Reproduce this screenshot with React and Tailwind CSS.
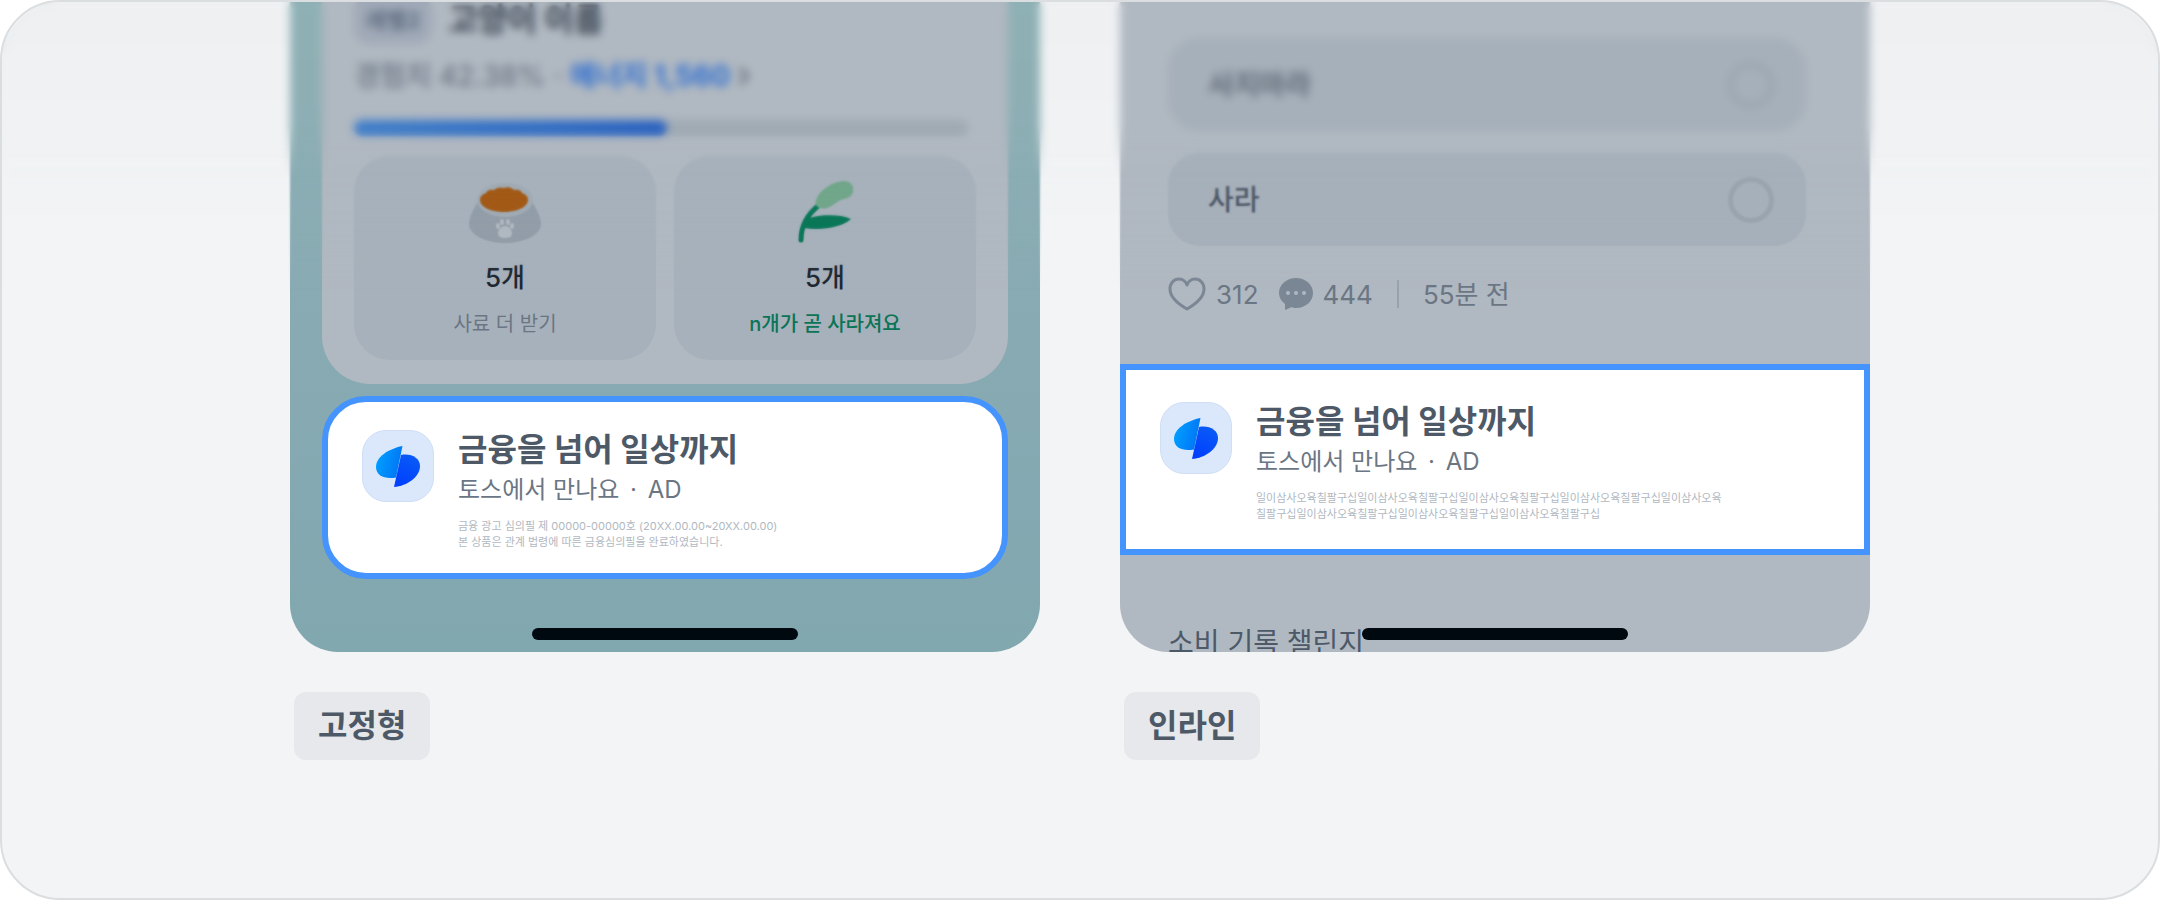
import React from 'react';
import { clsx } from 'clsx';
import { twMerge } from 'tailwind-merge';

export function cn(...inputs) {
    return twMerge(clsx(inputs));
}

const BrandIcon = () => (
    <div className="flex size-18 shrink-0 items-center justify-center rounded-3xl border border-[#cfdef5] bg-[#dbe8fc]">
        <svg className="h-[41px] w-11" viewBox="0 0 44 41" aria-hidden="true">
            <defs>
                <linearGradient id="wing-left" x1="0" y1="0.3" x2="1" y2="0.6">
                    <stop offset="0" stopColor="#00a1ff" />
                    <stop offset="1" stopColor="#0073f5" />
                </linearGradient>
                <linearGradient id="wing-right" x1="0.8" y1="0" x2="0.4" y2="1">
                    <stop offset="0" stopColor="#0a5cf5" />
                    <stop offset="1" stopColor="#0040ff" />
                </linearGradient>
            </defs>
            <path d="M26.5 0C12 3 0 11 0 21c0 9 9 12.500 20 10.500z" fill="url(#wing-left)" />
            <path d="M25 9c10-2 19 3 19 11 0 11-13 20-26 21z" fill="url(#wing-right)" />
        </svg>
    </div>
);

const FoodBowl = () => (
    <svg className="h-16 w-18" viewBox="0 0 72 64" aria-hidden="true">
        <path d="M9 22C5 28 0 37 0 44c0 11 17 19 36 19s36-8 36-19c0-7-5-16-9-22z" fill="#929da8" />
        <ellipse cx="36" cy="20" rx="28" ry="17" fill="#a0abb5" />
        <path d="M11 20c0-4 3-6 6-7 1-3 5-4 8-3 3-3 7-3 10-2 4-2 8 0 10 2 4-1 7 0 8 3 3 1 6 3 6 7 0 7-11 12-24 12S11 27 11 20z" fill="#a35a17" />
        <g fill="#b0b8c1">
            <path d="M36 46c4 0 7 4 7 7 0 4-3 5-7 5s-7-1-7-5c0-3 3-7 7-7z" />
            <ellipse cx="29" cy="46" rx="2" ry="3" />
            <ellipse cx="33" cy="42" rx="2" ry="3" />
            <ellipse cx="39" cy="42" rx="2" ry="3" />
            <ellipse cx="43" cy="46" rx="2" ry="3" />
        </g>
    </svg>
);

const Foxtail = () => (
    <svg className="h-16 w-14" viewBox="0 0 56 64" aria-hidden="true">
        <path d="M4 60C4 47 10 35 21 26" fill="none" stroke="#0a7758" strokeWidth="5" strokeLinecap="round" />
        <path d="M8 40c8-5 33-7 46-1-9 8-29 12-47 9z" fill="#0a7758" />
        <path d="M30 28c-8 2-13-2-11-8C23 9 36 2 46 1c7-1 12 6 10 11-2 6-6 6-12 8-5 2-8 6-14 8z" fill="#71a68a" />
    </svg>
);

const AdBanner = ({ className, children }) => (
    <article className={cn("flex gap-6 border-6 border-[#4593fc] bg-white", className)}>
        <BrandIcon />
        <div className="min-w-0">
            <h3 className="text-[32px] leading-10 font-bold text-[#4e5968]">금융을 넘어 일상까지</h3>
            <p className="text-2xl leading-10 text-[#6b7684]">
                토스에서 만나요 <span className="mx-1">·</span> AD
            </p>
            <p className="mt-2 text-[11px] leading-4 text-[#b0b8c1]">{children}</p>
        </div>
    </article>
);

const ItemTile = ({ icon, count, label, labelClass }) => (
    <div className="flex flex-1 flex-col items-center rounded-[36px] bg-[#a7b1bb] pt-6 pb-[22px]">
        {icon}
        <p className="mt-[18px] text-[26px] leading-8 font-medium text-[#1c2630]">{count}</p>
        <p className={cn("mt-4 text-xl leading-7 text-[#6b7684]", labelClass)}>{label}</p>
    </div>
);

const Choice = ({ label }) => (
    <label className="flex h-[93px] items-center justify-between rounded-[32px] bg-[#a6b0ba] pr-8 pl-10 text-[28px] font-medium text-[#4e5968]">
        {label}
        <input type="radio" name="choice" className="size-[46px] appearance-none rounded-full border-5 border-[#9aa4ae]" />
    </label>
);

const HomeIndicator = () => (
    <div className="absolute bottom-3 left-1/2 h-3 w-[266px] -translate-x-1/2 rounded-full bg-[#000810]" />
);

const Example = ({ name, className, children }) => (
    <figure className="w-[750px]">
        <div className={cn("relative h-[650px] overflow-hidden rounded-b-[48px]", className)}>
            {children}
            <HomeIndicator />
        </div>
        <figcaption className="mt-10 ml-1 inline-block rounded-xl bg-[#e6e8eb] px-6 py-3.5 text-[32px] leading-10 font-bold text-[#4e5968]">
            {name}
        </figcaption>
    </figure>
);

const FixedExample = () => (
    <Example name="고정형" className="bg-linear-to-b from-[#8fb1b5] via-[#88aab3] to-[#81a7af] px-8">
        <section className="rounded-b-[48px] bg-[#b0b8c1] px-8 pb-6">
            <div className="-mt-1.5 flex items-center gap-4">
                <span className="flex h-12 items-center rounded-2xl bg-[#a0a9b7] px-3 text-[22px] leading-7 font-bold text-[#5c6b80]">레벨2</span>
                <h2 className="text-[32px] leading-12 font-bold text-[#333d4b]">고양이 이름</h2>
            </div>
            <p className="mt-3 flex items-center gap-2 text-[28px] leading-10 font-medium text-[#6b7684]">
                <span>경험치 42.38%</span>
                <span>·</span>
                <a href="#energy" className="flex items-center gap-2 font-bold text-[#2f6fd0]">
                    에너지 1,560
                    <svg className="h-5 w-3" viewBox="0 0 12 20" fill="none" stroke="#6b7684" strokeWidth="4" aria-hidden="true">
                        <path d="M2 2l7 8-7 8" />
                    </svg>
                </a>
            </p>
            <div className="mt-6 mr-2 h-4 rounded-full bg-[#9faab3]">
                <div className="h-4 w-[51%] rounded-full bg-linear-to-r from-[#417fc9] to-[#2a62c0]" />
            </div>
            <div className="mt-5 flex gap-[18px]">
                <ItemTile icon={<FoodBowl />} count="5개" label="사료 더 받기" />
                <ItemTile icon={<Foxtail />} count="5개" label="n개가 곧 사라져요" labelClass="font-medium text-[#0a7456]" />
            </div>
        </section>
        <AdBanner className="mt-3 rounded-[44px] px-[34px] pt-7 pb-[23px]">
            금융 광고 심의필 제 00000-00000호 (20XX.00.00~20XX.00.00)
            <br />
            본 상품은 관계 법령에 따른 금융심의필을 완료하였습니다.
        </AdBanner>
    </Example>
);

const InlineExample = () => (
    <Example name="인라인" className="bg-[#b0b8c1]">
        <div className="flex flex-col gap-[22px] px-12 pt-9 pr-16">
            <Choice label="사지마라" />
            <Choice label="사라" />
        </div>
        <div className="mt-6 flex h-12 items-center px-12 text-[26px] text-[#6b7684]">
            <svg className="h-[34px] w-[38px]" viewBox="0 0 38 34" fill="none" stroke="#7b8794" strokeWidth="3" strokeLinejoin="round" aria-hidden="true">
                <path d="M19 32C12 28 2 21 2 12 2 6 6 2 11 2c4 0 7 3 8 6 1-3 4-6 8-6 5 0 9 4 9 10 0 9-10 16-17 20z" />
            </svg>
            <span className="ml-2.5">312</span>
            <svg className="ml-5 h-8 w-[34px]" viewBox="0 0 34 32" aria-hidden="true">
                <path d="M17 0c10 0 17 7 17 15s-7 15-17 15c-1 0-3 0-4-1l-7 3 0-6C2 23 0 19 0 15 0 7 7 0 17 0z" fill="#7b8794" />
                <g fill="#b0b8c1">
                    <circle cx="9" cy="15" r="2" />
                    <circle cx="17" cy="15" r="2" />
                    <circle cx="25" cy="15" r="2" />
                </g>
            </svg>
            <span className="ml-2.5">444</span>
            <span className="mx-6 h-7 w-0.5 bg-[#98a2ad]" />
            <span>55분 전</span>
        </div>
        <AdBanner className="mt-[46px] px-[34px] pt-8 pb-[27px]">
            일이삼사오육칠팔구십일이삼사오육칠팔구십일이삼사오육칠팔구십일이삼사오육칠팔구십일이삼사오육
            <br />
            칠팔구십일이삼사오육칠팔구십일이삼사오육칠팔구십일이삼사오육칠팔구십
        </AdBanner>
        <p className="mt-[68px] px-12 text-[28px] leading-10 text-[#4e5968]">소비 기록 챌린지</p>
    </Example>
);

export default function App() {
    return (
        <main className="relative min-h-screen overflow-hidden rounded-[60px] border-2 border-[#dadee1] bg-[#f2f4f6] bg-linear-to-b from-[#eef0f2] via-[#f2f4f6] via-25% to-[#f2f4f6] pb-20 font-['Inter','Noto_Sans_CJK_KR',sans-serif]">
            <div className="flex flex-wrap justify-center gap-20">
                <FixedExample />
                <InlineExample />
            </div>

            {/* Content fades out of focus towards the top */}
            <div className="pointer-events-none absolute inset-x-0 top-0 h-72 mask-b-from-60% backdrop-blur-[1px]" />
            <div className="pointer-events-none absolute inset-x-0 top-0 h-44 mask-b-from-70% backdrop-blur-[4px]" />
        </main>
    );
}
